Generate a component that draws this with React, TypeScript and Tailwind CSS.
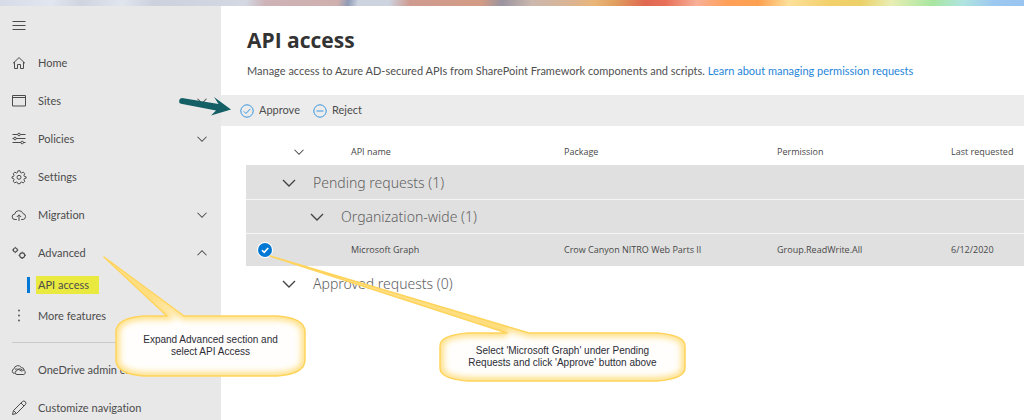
import type { ReactNode } from 'react';

type IconProps = { children: ReactNode; className?: string };

const Icon = ({ children, className = 'h-4 w-4' }: IconProps) => (
  <svg
    viewBox="0 0 16 16"
    className={`shrink-0 ${className}`}
    fill="none"
    stroke="currentColor"
    strokeWidth="1"
    aria-hidden="true"
  >
    {children}
  </svg>
);

const Chevron = ({ up = false, className = 'h-3 w-3' }: { up?: boolean; className?: string }) => (
  <Icon className={className}>
    <path d={up ? 'M2 11l6-6 6 6' : 'M2 5l6 6 6-6'} strokeWidth="1.4" />
  </Icon>
);

const icons = {
  home: <path d="M2 8.3L8 2.6l6 5.7M3.5 7v6.5h3V9.5h3v4h3V7" />,
  sites: <path d="M1.5 2.5h13v10.5h-13zM1.5 4.5h13" />,
  policies: (
    <>
      <path d="M1.5 3.5h5.2M9.3 3.5h5.2M1.5 7.5h1.4M5.2 7.5h9.3M1.5 11.5h8.6M12.4 11.5h2.1" />
      <circle cx="8" cy="3.5" r="1.3" />
      <circle cx="4" cy="7.5" r="1.3" />
      <circle cx="11.2" cy="11.5" r="1.3" />
    </>
  ),
  settings: (
    <>
      <path d="M6.9 1.8h2.2l.4 1.7 1.2.5 1.5-.9 1.6 1.6-.9 1.5.5 1.2 1.7.4v1.4l-1.7.4-.5 1.2.9 1.5-1.6 1.6-1.5-.9-1.2.5-.4 1.2H6.9l-.4-1.2-1.2-.5-1.5.9-1.6-1.6.9-1.5-.5-1.2L1 9.2V7.8l1.6-.4.5-1.2-.9-1.5 1.6-1.6 1.5.9 1.2-.5z" />
      <circle cx="8" cy="8.3" r="2" />
    </>
  ),
  migration: (
    <>
      <path d="M5.8 12.5H4a2.7 2.7 0 0 1-.3-5.4A4.3 4.3 0 0 1 12 6.6a3 3 0 0 1 .2 5.9h-2" />
      <path d="M8 14V8M5.8 10L8 7.8l2.2 2.2" />
    </>
  ),
  advanced: (
    <>
      <circle cx="4.3" cy="5" r="2" strokeWidth="1.2" />
      <circle cx="11.2" cy="10.3" r="2.5" strokeWidth="1.2" />
      <path d="M4.3 1.8v1M4.3 7.2v1M1.3 5h1M6.3 5h1M11.2 6.6v1M11.2 13v1M7.5 10.3h1M14 10.3h1" />
    </>
  ),
  more: (
    <g fill="currentColor" stroke="none">
      <circle cx="8" cy="2.5" r="0.9" />
      <circle cx="8" cy="7.5" r="0.9" />
      <circle cx="8" cy="12.5" r="0.9" />
    </g>
  ),
  onedrive: (
    <>
      <path d="M3.5 11.5a2.4 2.4 0 0 1-.5-4.7A4 4 0 0 1 10.3 5.500a3 3 0 0 1 2.900 2.500" />
      <path d="M6 12.500a1.900 1.900 0 0 1 0-3.800 2.900 2.900 0 0 1 5.200-.5 2.200 2.200 0 0 1 1.600 4.300zM4 7.200c2-.6 4 .3 7.200 2.200" />
    </>
  ),
  pencil: <path d="M1.5 14.5l1-4L11.3 1.7a1.7 1.7 0 0 1 3 3L5.5 13.5zM2.5 10.5l3 3M10 3l3 3" />,
};

const navItems = [
  { label: 'Home', icon: icons.home },
  { label: 'Sites', icon: icons.sites, expandable: true },
  { label: 'Policies', icon: icons.policies, expandable: true },
  { label: 'Settings', icon: icons.settings },
  { label: 'Migration', icon: icons.migration, expandable: true },
  { label: 'Advanced', icon: icons.advanced, expandable: true, expanded: true },
];

type NavRowProps = {
  label: string;
  icon: ReactNode;
  expandable?: boolean;
  expanded?: boolean;
  className?: string;
};

const NavRow = ({ label, icon, expandable, expanded, className = 'h-[38px]' }: NavRowProps) => {
  const content = (
    <>
      <Icon>{icon}</Icon>
      <span className="flex-1 text-left">{label}</span>
      {expandable && <Chevron up={expanded} />}
    </>
  );
  const styles = `flex w-full items-center gap-[11px] pl-[11px] pr-[13px] ${className}`;
  return expandable ? (
    <button type="button" aria-expanded={!!expanded} className={styles}>
      {content}
    </button>
  ) : (
    <a href="#" className={styles}>
      {content}
    </a>
  );
};

const Sidebar = () => (
  <nav className="w-[221px] shrink-0 bg-[#e8e8e8] text-[11px] text-[#4c4c4c]">
    <button type="button" aria-label="Toggle navigation" className="flex h-[38px] items-center pl-[11px]">
      <Icon>
        <path d="M1.5 4.5h13M1.5 8.5h13M1.5 12.5h13" />
      </Icon>
    </button>
    {navItems.map((item) => (
      <NavRow key={item.label} {...item} />
    ))}
    <a href="#" aria-current="page" className="flex h-[26px] items-center pl-[27px]">
      <span className="h-4 w-[3px] bg-[#0078d4]" />
      <span className="ml-[6px] bg-[#e9e93f] pr-[10px] pl-[2px] leading-[18px]">API access</span>
    </a>
    <NavRow label="More features" icon={icons.more} className="h-9" />
    <hr className="mx-3 mt-2 mb-2 border-[#cacaca]" />
    <NavRow label="OneDrive admin center" icon={icons.onedrive} />
    <NavRow label="Customize navigation" icon={icons.pencil} />
  </nav>
);

const CommandBar = () => (
  <div className="flex h-[31px] items-center gap-3 bg-[#ececec] pl-[18px] text-[11px] text-[#4c4c4c]">
    <button type="button" className="flex items-center gap-1">
      <Icon className="h-4 w-4 text-[#3a96dd]">
        <circle cx="8" cy="8" r="6.2" />
        <path d="M4.8 8.3l2.2 2.2 4.3-4.6" />
      </Icon>
      Approve
    </button>
    <button type="button" className="flex items-center gap-1">
      <Icon className="h-4 w-4 text-[#3a96dd]">
        <circle cx="8" cy="8" r="6.2" />
        <path d="M4.5 8h7" />
      </Icon>
      Reject
    </button>
  </div>
);

type GroupRowProps = { label: string; nested?: boolean; selected?: boolean };

const GroupRow = ({ label, nested = false, selected = false }: GroupRowProps) => (
  <tr className={selected ? 'border-b border-[#f6f6f6] bg-[#e0e0e0]' : ''}>
    <th colSpan={5} scope="colgroup" className="h-[34px] p-0 pt-[2px] text-left font-normal">
      <button
        type="button"
        aria-expanded="true"
        className={`flex items-center gap-4 font-['Noto_Sans','Segoe_UI',sans-serif] text-sm font-light text-[#606060] ${nested ? 'pl-[63px]' : 'pl-[35px]'}`}
      >
        <Chevron className="h-4 w-4 text-[#444444]" />
        {label}
      </button>
    </th>
  </tr>
);

const RequestsTable = () => (
  <table className="w-full table-fixed border-collapse text-left font-['Open_Sans','Segoe_UI',sans-serif] text-[9px] text-[#484848]">
    <colgroup>
      <col className="w-[105px]" />
      <col className="w-[213px]" />
      <col className="w-[213px]" />
      <col className="w-[174px]" />
      <col />
    </colgroup>
    <thead>
      <tr className="h-[39px]">
        <th className="p-0 pt-3 pl-[47px]">
          <button type="button" aria-label="Collapse all groups" className="flex">
            <Chevron className="h-3 w-3" />
          </button>
        </th>
        <th className="p-0 pt-3 font-normal">API name</th>
        <th className="p-0 pt-3 font-normal">Package</th>
        <th className="p-0 pt-3 font-normal">Permission</th>
        <th className="p-0 pt-3 font-normal whitespace-nowrap">Last requested</th>
      </tr>
    </thead>
    <tbody>
      <GroupRow label="Pending requests (1)" selected />
      <GroupRow label="Organization-wide (1)" nested selected />
      <tr className="h-[33px] bg-[#e0e0e0]">
        <td className="p-0 pl-3">
          <span className="relative flex h-[14px] w-[14px]">
            <input
              type="checkbox"
              defaultChecked
              aria-label="Select Microsoft Graph"
              className="h-[14px] w-[14px] appearance-none rounded-full bg-[#0078d4] ring-1 ring-white"
            />
            <svg
              viewBox="0 0 14 14"
              className="pointer-events-none absolute inset-0"
              fill="none"
              stroke="white"
              strokeWidth="1.6"
              aria-hidden="true"
            >
              <path d="M4 7.2l2.2 2.2L10.2 5" />
            </svg>
          </span>
        </td>
        <td className="p-0">Microsoft Graph</td>
        <td className="p-0">Crow Canyon NITRO Web Parts II</td>
        <td className="p-0">Group.ReadWrite.All</td>
        <td className="p-0">6/12/2020</td>
      </tr>
      <GroupRow label="Approved requests (0)" />
    </tbody>
  </table>
);

// Speech balloon: amber outline with a soft inner glow, text sits over the body
type CalloutProps = {
  id: string;
  path: string;
  viewBox: string;
  position: string;
  textBox: string;
  children: ReactNode;
};

const Callout = ({ id, path, viewBox, position, textBox, children }: CalloutProps) => (
  <div className={`pointer-events-none absolute ${position}`}>
    <svg viewBox={viewBox} className="absolute inset-0 h-full w-full" aria-hidden="true">
      <defs>
        <clipPath id={`${id}-clip`}>
          <path d={path} />
        </clipPath>
        <filter id={`${id}-glow`}>
          <feGaussianBlur stdDeviation="3" />
        </filter>
      </defs>
      <path d={path} fill="#fffefc" />
      <g clipPath={`url(#${id}-clip)`}>
        <path d={path} fill="none" stroke="#ffdc78" strokeWidth="7" filter={`url(#${id}-glow)`} />
      </g>
      <path d={path} fill="none" stroke="#ffd45c" strokeWidth="1.5" strokeLinejoin="round" />
    </svg>
    <p
      className={`absolute flex items-center justify-center text-center font-['Liberation_Sans',Arial,sans-serif] text-[10px] leading-3 text-[#2c2c36] ${textBox}`}
    >
      {children}
    </p>
  </div>
);

const App = () => {
  return (
    <div className="relative flex h-screen flex-col overflow-hidden bg-white font-['Lato','Segoe_UI',sans-serif] [font-variant-ligatures:none]">
      <div className="h-[6px] shrink-0 bg-[linear-gradient(100deg,#d6dbe8_0%,#e2e6f0_5%,#d0d4e0_8%,#e0e5ee_12%,#cdd1de_15%,#d3d8e3_24%,#cdb2b6_26%,#cfb0ae_33%,#8f9bb5_34%,#cdd3df_35%,#cdd3df_38%,#cf9b90_40%,#d29b84_47%,#9a94a0_49%,#ccb8ae_52%,#dcb490_56%,#eab678_58%,#e0a060_60%,#e06850_63%,#e87058_65%,#f8b098_68%,#ffa058_71%,#fca050_74%,#fde09a_77%,#f2d06a_81%,#ecd068_84%,#e8eeb4_87%,#a8e6a0_91%,#b0e4e0_94%,#9cc8f0_97%,#98c4f0_100%)]" />
      <div className="flex min-h-0 flex-1">
        <Sidebar />
        <main className="min-w-0 flex-1">
          <header className="h-[89px] pt-[18px] pl-[26px]">
            <h1 className="font-['Open_Sans','Segoe_UI',sans-serif] text-[21px] leading-8 font-bold text-[#333333]">
              API access
            </h1>
            <p className="mt-[7px] text-[11px] leading-4 text-[#505050]">
              Manage access to Azure AD-secured APIs from SharePoint Framework components and scripts.{' '}
              <a href="#" className="text-[#1f85d8]">
                Learn about managing permission requests
              </a>
            </p>
          </header>
          <CommandBar />
          <div className="pl-[25px]">
            <RequestsTable />
          </div>
        </main>
      </div>

      <svg
        viewBox="0 0 54 20"
        className="pointer-events-none absolute top-[96px] left-[178px] h-5 w-[54px]"
        aria-hidden="true"
      >
        <path d="M4 2a3 3 0 0 0-1 5.8L38 14.5 33 19.5 53 13.5 36 1l4.5 7z" fill="#145f66" />
      </svg>

      <Callout
        id="advanced"
        viewBox="0 0 204 124"
        position="top-[255px] left-[103px] h-[124px] w-[204px]"
        textBox="top-[61px] left-[13px] h-[60px] w-[189px]"
        path="M1 2L81 61H174Q202 63 202 77V105Q202 119 174 121H41Q13 119 13 105V77Q13 63 41 61H64Z"
      >
        Expand Advanced section and
        <br />
        select API Access
      </Callout>
      <Callout
        id="graph"
        viewBox="0 0 418 128"
        position="top-[255px] left-[269px] h-[128px] w-[418px]"
        textBox="top-[78px] left-[171px] h-[48px] w-[245px]"
        path="M1 1L260 78H388Q416 80 416 91V113Q416 124 388 126H199Q171 124 171 113V91Q171 80 199 78H238Z"
      >
        Select 'Microsoft Graph' under Pending
        <br />
        Requests and click 'Approve' button above
      </Callout>
    </div>
  );
};

export default App;
